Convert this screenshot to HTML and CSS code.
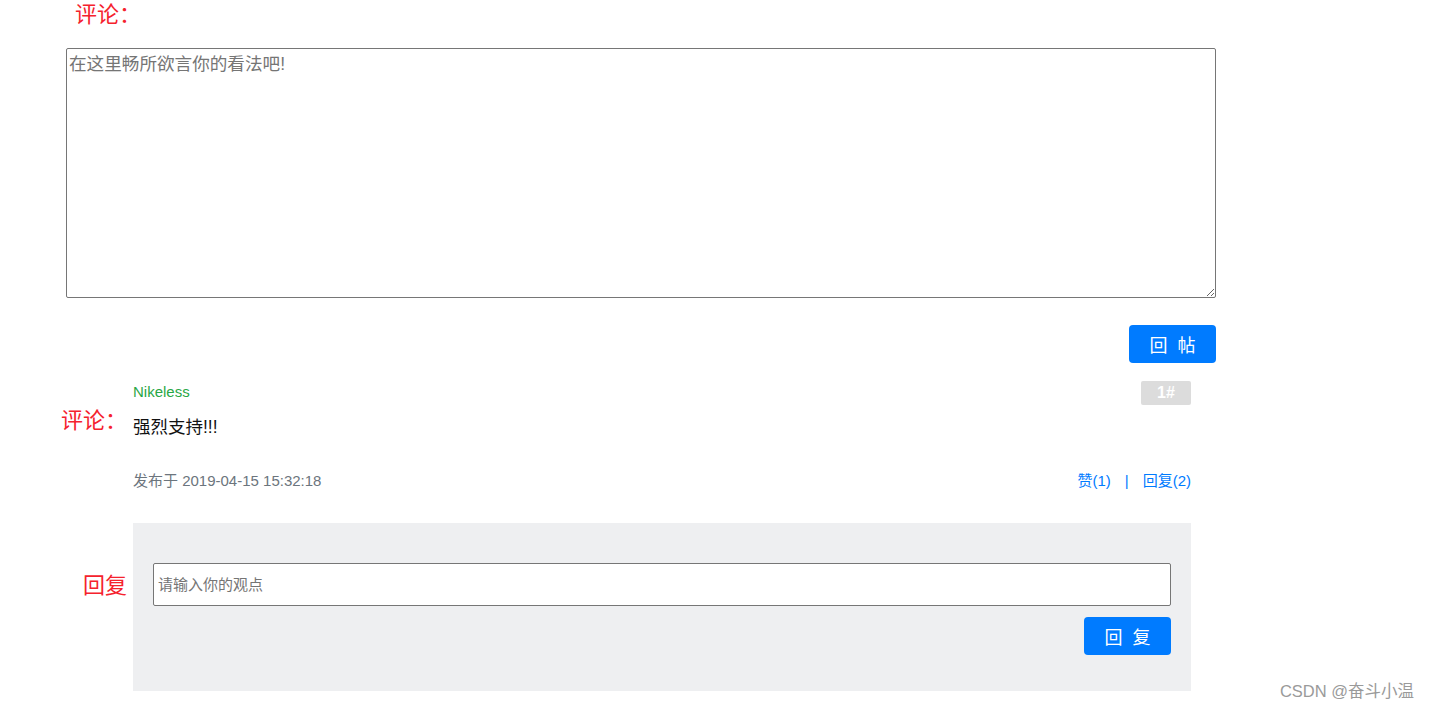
FILE: index.html
```html
<!DOCTYPE html>
<html lang="zh-CN">
<head>
<meta charset="utf-8">
<title>评论</title>
<link rel="stylesheet" href="styles.css">
</head>
<body>
<div class="page">
  <div class="title">评论：</div>
  <div class="editor">
    <textarea class="editor-input" placeholder="在这里畅所欲言你的看法吧!"></textarea>
  </div>
  <div class="editor-actions">
    <button class="btn">回 帖</button>
  </div>

  <div class="comment">
    <div class="row">
      <div class="label"></div>
      <div class="content head">
        <span class="author">Nikeless</span>
        <span class="floor">1#</span>
      </div>
    </div>
    <div class="row body-row">
      <div class="label label-comment">评论：</div>
      <div class="content text">强烈支持!!!</div>
    </div>
    <div class="row meta-row">
      <div class="label"></div>
      <div class="content meta">
        <span class="date">发布于 2019-04-15 15:32:18</span>
        <span class="links"><a class="link">赞(1)</a><span class="sep">|</span><a class="link">回复(2)</a></span>
      </div>
    </div>
    <div class="row reply-row">
      <div class="label label-reply">回复</div>
      <div class="content reply-box">
        <input class="reply-input" type="text" placeholder="请输入你的观点">
        <div class="reply-actions">
          <button class="btn">回 复</button>
        </div>
      </div>
    </div>
  </div>
</div>
<div class="watermark">CSDN @奋斗小温</div>
</body>
</html>
```

FILE: styles.css
```css
html, body {
  margin: 0;
  padding: 0;
  background: #fff;
}
body {
  font-family: "Liberation Sans", "Noto Sans CJK SC", sans-serif;
  color: #212529;
  height: 709px;
  overflow: hidden;
  position: relative;
}
.page {
  display: flex;
  flex-direction: column;
}
.title {
  margin-left: 75px;
  font-size: 22px;
  line-height: 30px;
  color: #f5222d;
}
.editor {
  margin-left: 66px;
  margin-top: 18px;
  width: 1150px;
}
.editor-input {
  display: block;
  box-sizing: border-box;
  width: 1150px;
  height: 250px;
  margin: 0;
  border: 1px solid #767676;
  border-radius: 2px;
  padding: 2px 2px;
  font-family: "Liberation Sans", "Noto Sans CJK SC", sans-serif;
  font-size: 17.6px;
  line-height: 26px;
  color: #333;
}
.editor-input::placeholder {
  color: #757575;
}
.editor-actions {
  margin-left: 66px;
  width: 1150px;
  margin-top: 27px;
  display: flex;
  justify-content: flex-end;
}
.btn {
  width: 87px;
  height: 38px;
  border: none;
  border-radius: 4px;
  background: #007bff;
  color: #fff;
  font-family: "Noto Sans CJK SC", sans-serif;
  font-size: 18px;
  letter-spacing: 3px;
  padding: 0 0 0 3px;
  cursor: pointer;
}
.comment {
  display: flex;
  flex-direction: column;
  margin-top: 18px;
}
.row {
  display: flex;
}
.label {
  width: 133px;
  box-sizing: border-box;
  padding-right: 6px;
  flex: none;
  text-align: right;
  font-size: 22px;
  line-height: 22px;
  color: #f5222d;
}
.content {
  width: 1058px;
  flex: none;
}
.head {
  display: flex;
  justify-content: space-between;
  align-items: center;
  height: 24px;
}
.author {
  color: #28a745;
  font-size: 15px;
  line-height: 18px;
  margin-top: -3px;
}
.floor {
  width: 50px;
  height: 24px;
  line-height: 24px;
  text-align: center;
  background: #dcdcdc;
  color: #fff;
  font-weight: bold;
  font-size: 16px;
  border-radius: 2px;
}
.body-row {
  margin-top: 8px;
}
.label-comment {
  margin-top: -3px;
}
.text {
  font-size: 17.5px;
  line-height: 28px;
  color: #111;
}
.meta-row {
  margin-top: 30px;
}
.meta {
  display: flex;
  justify-content: space-between;
  align-items: center;
  line-height: 20px;
  font-size: 15px;
}
.date {
  color: #6c757d;
}
.links {
  display: flex;
  align-items: center;
  color: #007bff;
}
.link {
  color: #007bff;
  cursor: pointer;
}
.sep {
  margin: 0 14px;
}
.reply-row {
  margin-top: 32px;
}
.label-reply {
  margin-top: 52px;
}
.reply-box {
  background: #eeeff1;
  box-sizing: border-box;
  height: 168px;
  padding: 40px 20px 0 20px;
  display: flex;
  flex-direction: column;
}
.reply-input {
  box-sizing: border-box;
  width: 1018px;
  height: 43px;
  margin: 0;
  border: 1px solid #767676;
  border-radius: 2px;
  padding: 0 4px;
  font-family: "Liberation Sans", "Noto Sans CJK SC", sans-serif;
  font-size: 15px;
  background: #fff;
}
.reply-input::placeholder {
  color: #757575;
}
.reply-actions {
  display: flex;
  justify-content: flex-end;
  margin-top: 11px;
}
.watermark {
  position: absolute;
  right: 16px;
  bottom: 8px;
  font-size: 16.5px;
  line-height: 20px;
  color: #9a9a9a;
}
```
